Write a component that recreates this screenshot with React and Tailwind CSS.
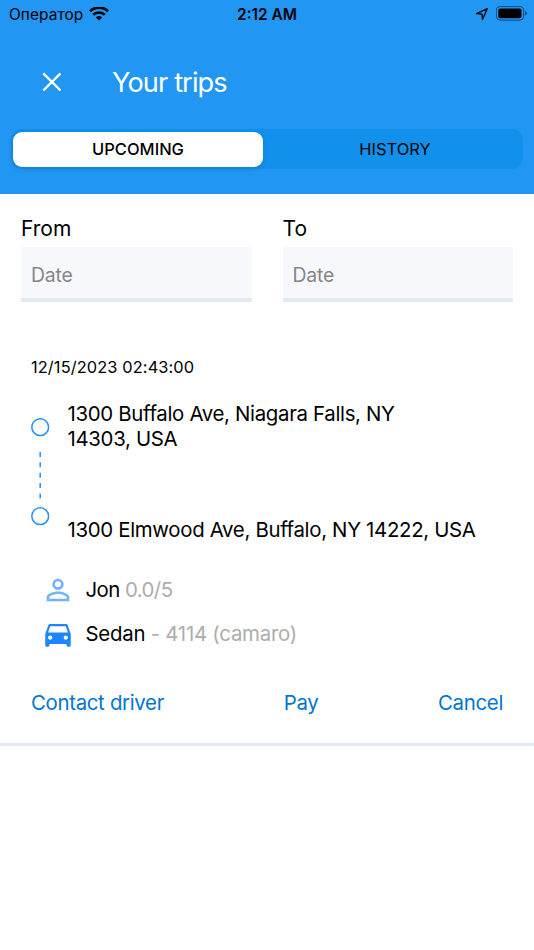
import React from 'react';
import { MdPersonOutline, MdDirectionsCar } from 'react-icons/md';

const WifiIcon = () => (
  <svg className="ml-[6px] h-[15px] w-[20px]" viewBox="0 0 20 15" fill="none" stroke="black" strokeWidth="2.7">
    <path d="M1 4.2a13 13 0 0 1 18 0" />
    <path d="M4.2 7.8a8.4 8.4 0 0 1 11.6 0" />
    <path d="M10 13.4 6.9 10.4a4.6 4.6 0 0 1 6.2 0z" fill="black" stroke="none" />
  </svg>
);

const StatusBar = () => (
  <div className="flex h-[28px] items-center justify-between pr-[6px] pl-[9px] text-black">
    <div className="flex flex-1 items-center">
      <span className="pt-px text-[15.4px] leading-[27px] tracking-[0.1px]">Оператор</span>
      <WifiIcon />
    </div>
    <span className="pt-px pr-[3px] text-center text-[15.4px] leading-[27px] font-semibold">2:12 AM</span>
    <div className="flex flex-1 items-center justify-end">
      <svg className="mr-[7px] h-[14px] w-[14px]" viewBox="0 0 14 14" fill="none" stroke="black" strokeWidth="1.3" strokeLinejoin="round">
        <path d="M1.5 6.6 12.3 1.6 7.5 12.5 7 7.1z" />
      </svg>
      <svg className="h-[16px] w-[32px]" viewBox="0 0 32 16">
        <rect x="0.3" y="0.6" width="27.4" height="13.6" rx="4" fill="none" stroke="black" strokeOpacity="0.5" />
        <rect x="2.3" y="2.5" width="23.2" height="9.8" rx="2" fill="black" />
        <path d="M29.1 5.3q1.8.6 1.8 2.1t-1.8 2.1z" fill="black" fillOpacity="0.5" />
      </svg>
    </div>
  </div>
);

const DateField = ({ label }) => (
  <label className="flex w-[230.5px] flex-col">
    <span className="h-[38.5px] text-[21px] leading-[40px]">{label}</span>
    <input
      type="text"
      placeholder="Date"
      className="h-[54.5px] border-b-4 border-[#e2eaf2] bg-[#f6f8fc] px-[10px] pt-[5px] text-[19.4px] tracking-[-0.2px] text-black outline-none placeholder:text-[#868686]"
    />
  </label>
);

const Stop = () => (
  <svg className="h-[19px] w-[19px]" viewBox="0 0 19 19" fill="none">
    <circle cx="9.2" cy="9.2" r="8.4" stroke="#2492f5" strokeWidth="1.5" />
  </svg>
);

const TripCard = () => (
  <div className="mt-[52px] h-[392px] border-b-[3px] border-[#e3eaf2] px-[31px]">
    <p className="text-[16.4px] leading-[27px] tracking-[0.1px]">12/15/2023 02:43:00</p>

    <div className="mt-[21px] flex">
      {/* Route markers */}
      <div className="mr-[17.5px] flex flex-col items-center pt-[16px]">
        <Stop />
        <svg className="mt-[15px] mb-[7px] h-[48px] w-[3px]" viewBox="0 0 3 48">
          <path d="M1.2 0v47" stroke="#2492f5" strokeWidth="1.5" strokeDasharray="5 5.35" />
        </svg>
        <Stop />
      </div>

      <div className="flex flex-col pt-[0.8px] text-[20.4px] leading-[24.7px] tracking-[-0.32px]">
        <p className="h-[50px] w-[350px]">1300 Buffalo Ave, Niagara Falls, NY 14303, USA</p>
        <p className="mt-[66px]">1300 Elmwood Ave, Buffalo, NY 14222, USA</p>
      </div>
    </div>

    {/* Driver and car */}
    <div className="mt-[32px] flex flex-col gap-[14px] pl-[10px] text-[20.4px] leading-[30px]">
      <div className="flex h-[30px] items-center tracking-[-0.55px]">
        <MdPersonOutline className="mr-[10.5px] h-[34px] w-[34px] text-[#73b3ff]" />
        <span>Jon <span className="text-[#adadad]">0.0/5</span></span>
      </div>
      <div className="flex h-[30px] items-center tracking-[-0.25px]">
        <MdDirectionsCar className="mr-[10.5px] h-[34px] w-[34px] text-[#1d86ff]" />
        <span>Sedan <span className="text-[#adadad]">- 4114 (camaro)</span></span>
      </div>
    </div>

    <div className="mt-[39px] flex justify-between text-[20.4px] leading-[30px] tracking-[-0.32px] text-[#0076d1]">
      <button>Contact driver</button>
      <button>Pay</button>
      <button>Cancel</button>
    </div>
  </div>
);

const App = () => {
  return (
    <div className="h-[950px] w-[534px] overflow-hidden bg-white font-[Inter,sans-serif] text-black">
      {/* Header */}
      <header className="h-[193.5px] bg-[#2196f3]">
        <StatusBar />
        <div className="mt-[34px] flex h-[40px] items-center pl-[42px] text-white">
          <svg className="mr-[50px] h-[20px] w-[20px]" viewBox="0 0 20 20" fill="none" stroke="currentColor" strokeWidth="2.4">
            <path d="M1.3 1.3l17.2 17.2M18.5 1.3l-17.2 17.2" />
          </svg>
          <h1 className="pt-[2px] text-[27.2px] leading-[40px] font-normal tracking-[-0.9px]">Your trips</h1>
        </div>
        <div className="mx-[11px] mt-[27px] flex h-[40px] items-center rounded-[11px] bg-[#1191ec] p-[2px] text-[16.5px] font-medium">
          <button className="h-[35px] w-[250px] rounded-[9px] bg-white shadow-[0_2px_6px_rgba(0,0,0,0.12)]">UPCOMING</button>
          <button className="h-[35px] flex-1 pl-[6px] font-normal">HISTORY</button>
        </div>
      </header>

      {/* Date filter */}
      <div className="flex justify-between px-[21px] pt-[15px]">
        <DateField label="From" />
        <DateField label="To" />
      </div>

      <TripCard />
    </div>
  );
};

export default App;
